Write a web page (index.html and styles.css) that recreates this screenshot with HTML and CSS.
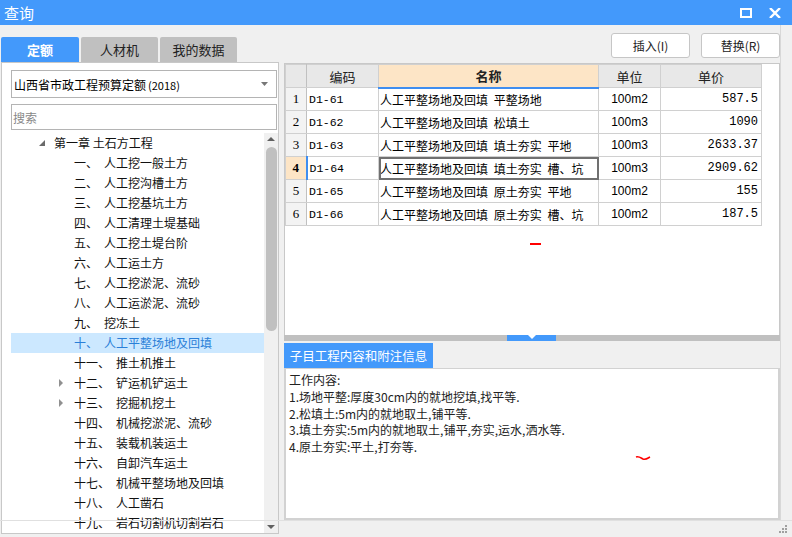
FILE: index.html
```html
<!DOCTYPE html>
<html lang="zh">
<head>
<meta charset="utf-8">
<link rel="stylesheet" href="styles.css">
</head>
<body>
<div class="window">
  <div class="titlebar">
    <span class="title">查询</span>
    <span class="tb-icons">
      <svg width="12" height="10" viewBox="0 0 12 10"><rect x="1" y="1" width="10" height="8" fill="none" stroke="#fff" stroke-width="2"/></svg>
      <svg width="12" height="10" viewBox="0 0 12 10"><path d="M1 0 L11 10 M11 0 L1 10" stroke="#fff" stroke-width="2.4"/></svg>
    </span>
  </div>
  <div class="main">
    <div class="left">
      <div class="tabs">
        <div class="tab active">定额</div>
        <div class="tab">人材机</div>
        <div class="tab">我的数据</div>
      </div>
      <div class="lpanel">
        <div class="select"><span>山西省市政工程预算定额<small>(2018)</small></span><svg width="7" height="4" viewBox="0 0 7 4"><path d="M0 0 H7 L3.5 4Z" fill="#777"/></svg></div>
        <div class="search">搜索</div>
        <div class="treewrap">
          <div class="tree">
            <div class="node l0"><span class="exp"></span>第一章 土石方工程</div>
            <div class="node l1"><span class="n">一、</span>人工挖一般土方</div>
            <div class="node l1"><span class="n">二、</span>人工挖沟槽土方</div>
            <div class="node l1"><span class="n">三、</span>人工挖基坑土方</div>
            <div class="node l1"><span class="n">四、</span>人工清理土堤基础</div>
            <div class="node l1"><span class="n">五、</span>人工挖土堤台阶</div>
            <div class="node l1"><span class="n">六、</span>人工运土方</div>
            <div class="node l1"><span class="n">七、</span>人工挖淤泥、流砂</div>
            <div class="node l1"><span class="n">八、</span>人工运淤泥、流砂</div>
            <div class="node l1"><span class="n">九、</span>挖冻土</div>
            <div class="node l1 sel"><span class="n">十、</span>人工平整场地及回填</div>
            <div class="node l1"><span class="n">十一、</span>推土机推土</div>
            <div class="node l1"><span class="col"></span><span class="n">十二、</span>铲运机铲运土</div>
            <div class="node l1"><span class="col"></span><span class="n">十三、</span>挖掘机挖土</div>
            <div class="node l1"><span class="n">十四、</span>机械挖淤泥、流砂</div>
            <div class="node l1"><span class="n">十五、</span>装载机装运土</div>
            <div class="node l1"><span class="n">十六、</span>自卸汽车运土</div>
            <div class="node l1"><span class="n">十七、</span>机械平整场地及回填</div>
            <div class="node l1"><span class="n">十八、</span>人工凿石</div>
            <div class="node l1"><span class="n">十九、</span>岩石切割机切割岩石</div>
          </div>
          <div class="vscroll">
            <svg width="14" height="12" viewBox="0 0 14 12"><path d="M3 8 L7 4 L11 8Z" fill="#606060"/></svg>
            <div class="thumb"></div>
            <div class="spacer"></div>
            <svg width="14" height="12" viewBox="0 0 14 12"><path d="M3 4 L11 4 L7 8Z" fill="#606060"/></svg>
          </div>
        </div>
      </div>
    </div>
    <div class="right">
      <div class="btns">
        <div class="btn">插入(I)</div>
        <div class="btn">替换(R)</div>
      </div>
      <div class="content">
        <div class="tablearea">
          <table class="grid">
            <thead>
              <tr><th class="rn"></th><th class="c-code">编码</th><th class="c-name">名称</th><th class="c-unit">单位</th><th class="c-price">单价</th></tr>
            </thead>
            <tbody>
              <tr><td class="rn">1</td><td class="code">D1-61</td><td class="name">人工平整场地及回填 平整场地</td><td class="unit">100m2</td><td class="price">587.5</td></tr>
              <tr><td class="rn">2</td><td class="code">D1-62</td><td class="name">人工平整场地及回填 松填土</td><td class="unit">100m3</td><td class="price">1090</td></tr>
              <tr><td class="rn">3</td><td class="code">D1-63</td><td class="name">人工平整场地及回填 填土夯实 平地</td><td class="unit">100m3</td><td class="price">2633.37</td></tr>
              <tr class="cur"><td class="rn">4</td><td class="code">D1-64</td><td class="name focus">人工平整场地及回填 填土夯实 槽、坑</td><td class="unit">100m3</td><td class="price">2909.62</td></tr>
              <tr><td class="rn">5</td><td class="code">D1-65</td><td class="name">人工平整场地及回填 原土夯实 平地</td><td class="unit">100m2</td><td class="price">155</td></tr>
              <tr><td class="rn">6</td><td class="code">D1-66</td><td class="name">人工平整场地及回填 原土夯实 槽、坑</td><td class="unit">100m2</td><td class="price">187.5</td></tr>
            </tbody>
          </table>
          <div class="mark mark1"></div>
        </div>
        <div class="splitter"><div class="handle"><svg width="8" height="4" viewBox="0 0 8 4"><path d="M0 0 H8 L4 4Z" fill="#fff"/></svg></div></div>
        <div class="subtabs"><div class="subtab">子目工程内容和附注信息</div></div>
        <div class="info">
          <p>工作内容:</p>
          <p>1.场地平整:厚度30cm内的就地挖填,找平等.</p>
          <p>2.松填土:5m内的就地取土,铺平等.</p>
          <p>3.填土夯实:5m内的就地取土,铺平,夯实,运水,洒水等.</p>
          <p>4.原土夯实:平土,打夯等.</p>
          <svg class="mark2" width="16" height="6" viewBox="0 0 16 6"><path d="M1 2 C4 1 6 3 8 4 C11 5 13 3 15 2" stroke="#f00" stroke-width="1.6" fill="none"/></svg>
        </div>
      </div>
    </div>
    <div class="rstrip"></div>
  </div>
  <div class="statusbar">
    <svg class="grip" width="10" height="10" viewBox="0 0 10 10"><g fill="#a0a0a0"><rect x="7" y="1" width="2" height="2"/><rect x="4" y="4" width="2" height="2"/><rect x="7" y="4" width="2" height="2"/><rect x="1" y="7" width="2" height="2"/><rect x="4" y="7" width="2" height="2"/><rect x="7" y="7" width="2" height="2"/></g></svg>
  </div>
</div>
</body>
</html>
```

FILE: styles.css
```css
* { box-sizing: border-box; }
html, body { margin: 0; padding: 0; }
body {
  width: 792px; height: 537px; overflow: hidden;
  background: #f0f0f0;
  font-family: "Noto Sans CJK SC", "Noto Sans", sans-serif;
  font-size: 12px; color: #000;
}
.window { width: 792px; height: 537px; display: flex; flex-direction: column; }
.titlebar {
  height: 25px; background: #4399fb; color: #fff;
  display: flex; align-items: center; justify-content: space-between;
  padding: 0 11px 0 4px; flex: none;
}
.title { font-size: 15px; line-height: 25px; }
.tb-icons { display: flex; gap: 17px; align-items: center; }
.main { flex: 1; display: flex; min-height: 0; }
.left { width: 284px; padding: 12px 0 0 1px; display: flex; flex-direction: column; flex: none; }
.tabs { display: flex; gap: 2px; height: 25px; }
.tab {
  width: 77px; height: 25px; background: #c0c0c0; color: #222;
  display: flex; align-items: center; justify-content: center; font-size: 13px;
  border-radius: 2px 2px 0 0;
}
.tab.active { width: 78px; background: #4399fb; color: #fff; font-weight: bold; }
.lpanel {
  width: 278px; flex: 1; background: #fff; border: 1px solid #c8c8c8;
  padding: 7px 0 0 9px; display: flex; flex-direction: column;
}
.select {
  width: 266px; height: 28px; border: 1px solid #b4b4b4;
  display: flex; align-items: center; justify-content: space-between;
  padding: 0 8px 0 2px; font-size: 12px; color: #000;
}
.select small { font-size: 11px; margin-left: 2px; }
.search {
  width: 266px; height: 26px; border: 1px solid #b4b4b4; margin-top: 6px;
  display: flex; align-items: center; padding-left: 1px; color: #888; font-size: 12px;
}
.treewrap { flex: 1; display: flex; margin-top: 3px; min-height: 0; overflow: hidden; }
.tree { flex: 1; overflow: hidden; }
.node {
  height: 20px; line-height: 20px; white-space: nowrap; display: flex; align-items: center;
  font-size: 12px; color: #111; position: relative;
}
.node.l0 { padding-left: 28px; }
.node.l1 { padding-left: 63px; }
.node .n { margin-right: 6px; }
.node.sel { background: #cce8ff; color: #2a7fd8; }
.exp {
  width: 0; height: 0; border-left: 6px solid transparent; border-bottom: 6px solid #6a6a6a;
  margin-right: 9px;
}
.col {
  position: absolute; left: 48px; top: 6px;
  width: 0; height: 0; border-top: 4px solid transparent; border-bottom: 4px solid transparent;
  border-left: 4px solid #909090;
}
.vscroll { width: 14px; background: #f0f0f0; display: flex; flex-direction: column; align-items: center; flex: none; }
.thumb { width: 11px; height: 184px; background: #c0c0c0; border-radius: 6px; margin-top: 2px; }
.spacer { flex: 1; }
.right { width: 496px; display: flex; flex-direction: column; flex: none; }
.btns { display: flex; justify-content: flex-end; gap: 11px; padding-top: 8px; height: 38px; padding-right: 0; }
.btn {
  width: 79px; height: 25px; background: #fff; border: 1px solid #c6c6c6; border-radius: 3px;
  display: flex; align-items: center; justify-content: center; font-size: 12px; color: #222;
}
.content { flex: 1; display: flex; flex-direction: column; min-height: 0; }
.tablearea { height: 272px; background: #fff; border-left: 1px solid #c8c8c8; border-right: 1px solid #c8c8c8; border-top: 1px solid #c8c8c8; position: relative; }
.grid { border-collapse: collapse; table-layout: fixed; width: 476px; }
.grid th, .grid td { border: 1px solid #d0d0d0; padding: 0 3px; white-space: nowrap; overflow: hidden; }
.grid th { height: 23px; background: #e8e8e8; font-weight: normal; font-size: 13px; color: #222; }
.grid td { height: 23px; font-size: 12px; }
.grid .rn { width: 21px; background: #f3f3f3; text-align: center; padding: 0; font-family: "Liberation Serif", serif; font-size: 13px; border-right-color: #c0c0c0; }
.grid th.rn { background: #e8e8e8; }
.c-code { width: 72px; }
.c-name { width: 220px; background: #fde5c6 !important; font-weight: bold !important; border-bottom: 2px solid #3f8ef0 !important; }
.c-unit { width: 62px; }
.c-price { width: 101px; }
.code { font-family: "Liberation Mono", monospace; font-size: 11.5px !important; padding-left: 2px !important; }
.name { padding-left: 1px !important; word-spacing: 3px; }
.unit { text-align: center; font-family: "Liberation Sans", sans-serif; }
.price { text-align: right; font-family: "Liberation Mono", monospace; }
.cur .rn { background: #fde5c6; font-weight: bold; border-right: 2px solid #3f8ef0; }
.focus { outline: 2px solid #707070; outline-offset: -2px; }
.mark { position: absolute; background: #f00; }
.mark1 { left: 245px; top: 179px; width: 11px; height: 2px; }
.splitter { height: 6px; background: #c0c0c0; position: relative; }
.handle { position: absolute; left: 223px; top: 0; width: 49px; height: 6px; background: #4399fb; display: flex; justify-content: center; align-items: flex-start; }
.handle svg { display: block; }
.subtabs { padding-top: 2px; height: 27px; display: flex; }
.subtab { width: 149px; height: 25px; background: #4399fb; color: #fff; font-size: 12.5px; display: flex; align-items: center; justify-content: center; }
.info {
  flex: 1; background: #fff; border: 2px solid #d2d2d2; border-top: 1px solid #d2d2d2;
  padding: 3px 0 0 3px; position: relative; font-size: 12px; color: #222;
}
.info p { margin: 0; line-height: 16.8px; }
.mark2 { position: absolute; left: 349px; top: 86px; }
.rstrip { flex: 1; border-left: 1px solid #d8d8d8; }
.statusbar { height: 17px; position: relative; flex: none; border-top: 1px solid #e0e0e0; }
.grip { position: absolute; right: 4px; top: 3px; }
```
